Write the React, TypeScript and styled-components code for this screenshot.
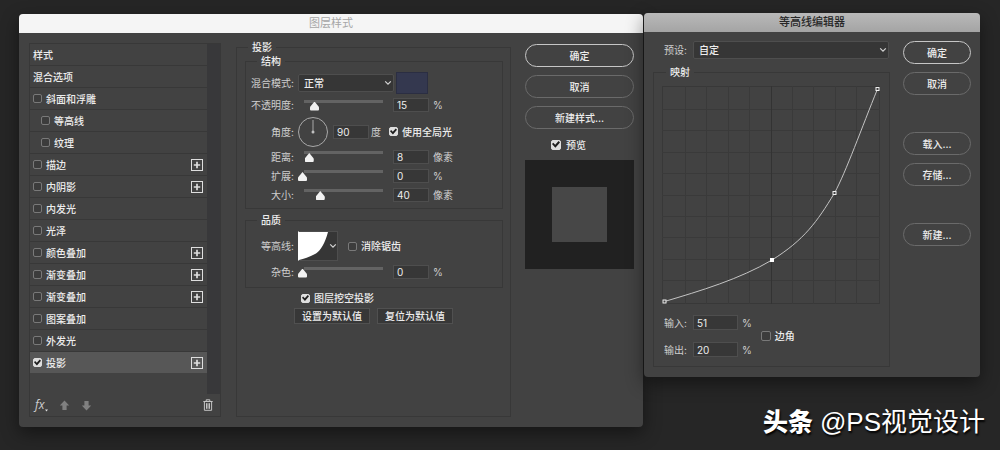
import React from "react";
import styled, { createGlobalStyle, css } from "styled-components";

const color = {
  desktop: "#262626",
  body: "#424242",
  line: "#383838",
  field: "#373737",
  fieldEdge: "#4e4e4e",
  text: "#ededed",
  label: "#cfcfcf",
  rail: "#38383a",
};

const GlobalStyle = createGlobalStyle`
  *, *::before, *::after { box-sizing: border-box; }
  body {
    margin: 0;
    background: ${color.desktop};
    color: ${color.text};
    font: 500 10px/12px Inter, "Noto Sans CJK SC", sans-serif;
  }
  button, input, select { font: inherit; color: inherit; margin: 0; }
  ul { list-style: none; margin: 0; padding: 0; }
  svg { display: block; }
`;

const Desktop = styled.main`
  position: relative;
  min-height: 100vh;
  padding: 13px 20px 22px 19px;
  display: grid;
  grid-template-columns: minmax(600px, 624fr) minmax(300px, 336fr);
  gap: 1px;
  align-items: start;
  overflow: hidden;
`;

const Dialog = styled.section<{ $front?: boolean }>`
  background: ${color.body};
  border-radius: 4px;
  box-shadow: 0 6px 18px rgba(0, 0, 0, 0.45);
  z-index: ${(p) => (p.$front ? 1 : 0)};
  margin-top: ${(p) => (p.$front ? 0 : 1)}px;
`;

const TitleBar = styled.h1<{ $front?: boolean }>`
  margin: 0;
  height: 19px;
  border-radius: 4px 4px 0 0;
  font-size: 11px;
  line-height: 19px;
  font-weight: ${(p) => (p.$front ? 500 : 400)};
  text-align: center;
  color: ${(p) => (p.$front ? "#262626" : "#a6a6a6")};
  background: ${(p) => (p.$front ? "linear-gradient(#b9b9b9, #a4a4a4)" : "#f5f5f5")};
`;

const StyleBody = styled.div`
  display: flex;
  padding: 8px 9px 10px 10px;
`;

const Sidebar = styled.aside`
  flex: none;
  width: 192px;
  margin: 2px 15px 0 0;
  border: 1px solid ${color.line};
  display: flex;
  flex-direction: column;
`;

const EffectArea = styled.div`
  flex: 1;
  display: flex;
  background: ${color.rail};
`;

const EffectList = styled.ul`
  flex: 1;
  margin-right: 13px;
  padding-bottom: 20px;
  background: ${color.body};
`;

const EffectRow = styled.li<{ $indent?: boolean; $active?: boolean }>`
  display: flex;
  align-items: center;
  justify-content: space-between;
  height: 22px;
  padding: 0 4px 0 ${(p) => (p.$indent ? 11 : 3)}px;
  border-bottom: 1px solid ${(p) => (p.$active ? color.body : color.line)};
  background: ${(p) => (p.$active ? "#575757" : "transparent")};
`;

const AddButton = styled.button`
  padding: 0;
  border: 0;
  background: none;
`;

const SidebarTools = styled.div`
  height: 22px;
  padding: 0 7px 0 5px;
  display: flex;
  align-items: center;
  gap: 11px;
`;

const ToolButton = styled.button<{ $last?: boolean }>`
  padding: 0;
  border: 0;
  background: none;
  color: #808080;
  display: flex;
  align-items: flex-end;
  ${(p) => p.$last && css`margin-left: auto; color: #c4c4c4;`}
`;

const FxMark = styled.span`
  font: italic 400 12px/14px "Open Sans", sans-serif;
  color: #d0d0d0;
`;

const CheckLabel = styled.label`
  display: flex;
  align-items: center;
  gap: 4px;
`;

const Checkbox = styled.input.attrs({ type: "checkbox" })`
  appearance: none;
  width: 9px;
  height: 9px;
  border: 1px solid #797979;
  border-radius: 2px;
  background: #3c3c3c;
  &:checked {
    border-color: #dedede;
    background: #dedede;
  }
  &:checked::before {
    content: "";
    display: block;
    width: 7px;
    height: 7px;
    background: #1e1e1e;
    clip-path: polygon(0 45%, 16% 28%, 40% 52%, 82% 6%, 100% 24%, 42% 92%);
  }
`;

const LargeCheckbox = styled(Checkbox)`
  width: 10px;
  height: 10px;
  &:checked::before {
    width: 8px;
    height: 8px;
  }
`;

const Group = styled.fieldset<{ $outer?: boolean }>`
  min-width: 0;
  margin: 0;
  border: 1px solid ${color.line};
  padding: ${(p) => (p.$outer ? "2px 7px 8px 8px" : "5px 0 4px")};
  & + & { margin-top: 5px; }
`;

const GroupTitle = styled.legend<{ $outer?: boolean }>`
  margin-left: ${(p) => (p.$outer ? 3 : 11)}px;
  padding: 0 4px;
  height: 12px;
`;

const Settings = styled(Group)`
  flex: 1;
`;

const Row = styled.div<{ $height: number }>`
  display: flex;
  align-items: center;
  height: ${(p) => p.$height}px;
`;

const RowLabel = styled.label`
  flex: none;
  width: 52px;
  padding-right: 4px;
  text-align: right;
  font-weight: 400;
  color: ${color.label};
`;

const Slider = styled.input.attrs({ type: "range" })`
  appearance: none;
  flex: none;
  width: 89px;
  height: 15px;
  margin-right: 6px;
  background: none;
  &::-webkit-slider-runnable-track {
    height: 13px;
    background: linear-gradient(#636363, #636363) 6px 1px / 79px 3px no-repeat;
  }
  &::-webkit-slider-thumb {
    appearance: none;
    width: 9px;
    height: 9px;
    margin-top: 3px;
    background: #f2f2f2;
    clip-path: path("M4.5 0 L8.6 5 Q9 5.6 9 6.2 V8 Q9 9 8 9 H1 Q0 9 0 8 V6.2 Q0 5.6 0.4 5 Z");
  }
`;

const NumberField = styled.input<{ $large?: boolean }>`
  flex: none;
  width: ${(p) => (p.$large ? 45 : 36)}px;
  height: ${(p) => (p.$large ? 15 : 14)}px;
  padding: 0 3px;
  border: 1px solid ${color.fieldEdge};
  background: ${color.field};
  font-weight: 400;
`;

const Unit = styled.span`
  margin-left: 4px;
  font-weight: 400;
  color: ${color.label};
`;

const SelectBox = styled.span`
  display: grid;
  align-items: center;
  flex: 1;
  & > * { grid-area: 1 / 1; }
  & > svg { justify-self: end; margin-right: 2px; pointer-events: none; }
`;

const ModeBox = styled(SelectBox)`
  flex: none;
  width: 96px;
`;

const Select = styled.select`
  appearance: none;
  width: 100%;
  height: 18px;
  padding: 0 5px;
  border: 1px solid ${color.fieldEdge};
  border-radius: 2px;
  background: #363636;
`;

const Swatch = styled.button`
  width: 32px;
  height: 22px;
  margin-left: 2px;
  border: 1px solid #2b2e42;
  background: #34384f;
`;

const Dial = styled.svg`
  flex: none;
  margin-right: 5px;
`;

const AngleUnit = styled(Unit)`
  margin-left: 2px;
`;

const SpacedCheck = styled(CheckLabel)`
  margin-left: 8px;
`;

const AntiAlias = styled(CheckLabel)`
  margin-left: 10px;
`;

const ContourButton = styled.button`
  width: 40px;
  height: 30px;
  padding: 0;
  border: 1px solid ${color.fieldEdge};
  border-left-color: #fff;
  background: #363636;
  display: flex;
  align-items: center;
  justify-content: space-between;
`;

const Defaults = styled.div`
  padding: 1px 0 0 49px;
`;

const Knockout = styled(CheckLabel)`
  height: 18px;
  margin: 0 0 1px 7px;
`;

const ButtonPair = styled.div`
  display: flex;
  gap: 7px;
`;

const SmallButton = styled.button`
  width: 76px;
  height: 16px;
  padding: 0;
  border: 1px solid #505050;
  background: #373737;
  line-height: 12px;
  white-space: nowrap;
`;

const Actions = styled.div<{ $width: number }>`
  flex: none;
  width: ${(p) => p.$width}px;
  display: flex;
  flex-direction: column;
  gap: 8px;
`;

const StyleActions = styled(Actions)`
  margin-left: 14px;
  padding-top: 3px;
`;

const EditorActions = styled(Actions)`
  margin-left: 13px;
`;

const PillButton = styled.button<{ $primary?: boolean; $newGroup?: boolean }>`
  height: 23px;
  margin-top: ${(p) => (p.$newGroup ? 29 : 0)}px;
  padding: 0;
  border: 1px solid ${(p) => (p.$primary ? "#c6c6c6" : "#6a6a6a")};
  border-radius: 12px;
  background: none;
`;

const PreviewCheck = styled(CheckLabel)`
  height: 15px;
  padding-left: 26px;
  gap: 5px;
`;

const Preview = styled.div`
  aspect-ratio: 1;
  display: grid;
  place-items: center;
  background: #212121;
  &::before {
    content: "";
    width: 50%;
    height: 50%;
    background: #474747;
  }
`;

const EditorBody = styled.div`
  display: flex;
  padding: 9px 9px 10px;
`;

const EditorMain = styled.div`
  flex: 1;
  min-width: 0;
`;

const PresetRow = styled.div`
  display: flex;
  align-items: center;
  padding: 0 1px 0 11px;
  margin-bottom: 7px;
`;

const EditorLabel = styled.label`
  width: 29px;
  font-weight: 400;
  color: ${color.label};
`;

const Mapping = styled(Group)`
  padding: 8px 9px 9px 8px;
`;

const MappingTitle = styled(GroupTitle)`
  margin-left: 4px;
`;

const CurveChart = styled.svg`
  width: 100%;
  height: auto;
`;

const MappingFields = styled.div`
  display: flex;
  align-items: center;
  gap: 9px;
  margin: 11px 0 0 2px;
`;

const FieldStack = styled.div`
  display: grid;
  gap: 12px;
`;

const FieldLine = styled.div`
  display: flex;
  align-items: center;
`;

const Watermark = styled.p`
  position: absolute;
  z-index: 2;
  right: 15px;
  bottom: 10px;
  margin: 0;
  display: flex;
  align-items: center;
  gap: 7px;
  font: 400 26px/36px "Liberation Sans", "Noto Sans CJK SC", sans-serif;
  color: #fff;
  text-shadow: 1px 2px 2px #000;
`;

const Brand = styled.strong`
  font-size: 25px;
  font-weight: 900;
`;

const Chevron = () => (
  <svg width="8" height="6" viewBox="0 0 8 6" fill="none" stroke="#d4d4d4" strokeWidth="1.2">
    <path d="M1.2 1.4 4 4.2 6.8 1.4" />
  </svg>
);

const PlusIcon = () => (
  <svg width="12" height="12" viewBox="0 0 12 12" fill="none" stroke="#dedede">
    <rect x="0.5" y="0.5" width="11" height="11" />
    <path d="M6 2.8V9.2M2.8 6H9.2" strokeWidth="1.7" />
  </svg>
);

const ArrowIcon = ({ down }: { down?: boolean }) => (
  <svg width="11" height="11" viewBox="0 0 11 11" fill="currentColor">
    <path d={down ? "M5.5 10.5 10.2 5.6H7.6V1H3.4V5.6H.8Z" : "M5.5 .5 10.2 5.4H7.6V10H3.4V5.4H.8Z"} />
  </svg>
);

const TrashIcon = () => (
  <svg width="10" height="12" viewBox="0 0 10 12" fill="none" stroke="currentColor">
    <path d="M.3 2.5H9.7M3.2 2.3V.8H6.8V2.3M1.4 2.8V11.3H8.6V2.8M3.5 4.2V9.8M5 4.2V9.8M6.5 4.2V9.8" />
  </svg>
);

type Effect = { name: string; heading?: boolean; indent?: boolean; add?: boolean; active?: boolean };

const effects: Effect[] = [
  { name: "样式", heading: true },
  { name: "混合选项", heading: true },
  { name: "斜面和浮雕" },
  { name: "等高线", indent: true },
  { name: "纹理", indent: true },
  { name: "描边", add: true },
  { name: "内阴影", add: true },
  { name: "内发光" },
  { name: "光泽" },
  { name: "颜色叠加", add: true },
  { name: "渐变叠加", add: true },
  { name: "渐变叠加", add: true },
  { name: "图案叠加" },
  { name: "外发光" },
  { name: "投影", add: true, active: true },
];

type SliderRowProps = { id: string; label: string; value: number; max: number; unit: string; height: number };

const SliderRow = ({ id, label, value, max, unit, height }: SliderRowProps) => (
  <Row $height={height}>
    <RowLabel htmlFor={id}>{label}:</RowLabel>
    <Slider aria-label={label} max={max} defaultValue={value} />
    <NumberField id={id} defaultValue={value} />
    <Unit>{unit}</Unit>
  </Row>
);

const gridSteps = [1, 2, 3, 4, 5, 6, 7, 8, 9];

const MappingCurve = () => (
  <CurveChart viewBox="0 0 218 218" role="img" aria-label="映射">
    <g fill="none" stroke="#383838">
      <rect x="0.5" y="0.5" width="217" height="217" />
      {gridSteps.map((i) => {
        const at = Math.round(1.5 + i * 21.4) + 0.5;
        return <path key={i} d={`M${at} 0V218M0 ${at}H218`} stroke="#3a3a3a" />;
      })}
      <path d="M109.500 0V218" stroke="#333" />
    </g>
    <path
      d="M2.5 215.5C38 205 78 193 110 174C142 154 155 136 172.5 107C184 86 200 41 215.5 3"
      fill="none"
      stroke="#c4c4c4"
    />
    <g fill="#424242" stroke="#f0f0f0">
      <rect x="1" y="214" width="3" height="3" />
      <rect x="171" y="105.500" width="3" height="3" />
      <rect x="214" y="1.500" width="3" height="3" />
      <rect x="108.500" y="172.500" width="3" height="3" fill="#fff" stroke="#fff" />
    </g>
  </CurveChart>
);

export default function App() {
  return (
    <Desktop lang="zh-CN">
      <GlobalStyle />

      <Dialog aria-label="图层样式">
        <TitleBar>图层样式</TitleBar>
        <StyleBody>
          <Sidebar>
            <EffectArea>
              <EffectList>
                {effects.map((e, i) => (
                  <EffectRow key={i} $indent={e.indent} $active={e.active}>
                    {e.heading ? (
                      <span>{e.name}</span>
                    ) : (
                      <CheckLabel>
                        <Checkbox defaultChecked={e.active} />
                        {e.name}
                      </CheckLabel>
                    )}
                    {e.add && (
                      <AddButton aria-label={`添加${e.name}`}>
                        <PlusIcon />
                      </AddButton>
                    )}
                  </EffectRow>
                ))}
              </EffectList>
            </EffectArea>
            <SidebarTools>
              <ToolButton aria-label="效果">
                <FxMark>fx</FxMark>
                <svg width="3" height="3" viewBox="0 0 3 3" fill="#e0e0e0">
                  <path d="M0 .5H3L1.500 2.500Z" />
                </svg>
              </ToolButton>
              <ToolButton aria-label="上移">
                <ArrowIcon />
              </ToolButton>
              <ToolButton aria-label="下移">
                <ArrowIcon down />
              </ToolButton>
              <ToolButton aria-label="删除" $last>
                <TrashIcon />
              </ToolButton>
            </SidebarTools>
          </Sidebar>

          <Settings $outer>
            <GroupTitle $outer>投影</GroupTitle>
            <Group>
              <GroupTitle>结构</GroupTitle>
              <Row $height={22}>
                <RowLabel htmlFor="mode">混合模式:</RowLabel>
                <ModeBox>
                  <Select id="mode">
                    <option>正常</option>
                  </Select>
                  <Chevron />
                </ModeBox>
                <Swatch aria-label="阴影颜色" />
              </Row>
              <SliderRow id="opacity" label="不透明度" value={15} max={100} unit="%" height={22} />
              <Row $height={31}>
                <RowLabel htmlFor="angle">角度:</RowLabel>
                <Dial width="30" height="30" viewBox="0 0 30 30" fill="none" stroke="#a8a8a8">
                  <circle cx="15" cy="15" r="14.500" />
                  <path d="M15 3V15" />
                  <circle cx="15" cy="15" r="1.500" fill="#c0c0c0" stroke="none" />
                </Dial>
                <NumberField id="angle" defaultValue={90} />
                <AngleUnit>度</AngleUnit>
                <SpacedCheck>
                  <Checkbox defaultChecked />
                  使用全局光
                </SpacedCheck>
              </Row>
              <SliderRow id="distance" label="距离" value={8} max={95} unit="像素" height={19} />
              <SliderRow id="spread" label="扩展" value={0} max={100} unit="%" height={19} />
              <SliderRow id="size" label="大小" value={40} max={180} unit="像素" height={19} />
            </Group>
            <Group>
              <GroupTitle>品质</GroupTitle>
              <Row $height={30}>
                <RowLabel as="span">等高线:</RowLabel>
                <ContourButton aria-label="等高线">
                  <svg width="29" height="28" viewBox="0 0 29 28">
                    <path d="M0 0H29C26 11 22 18 17 21.500C11 25 5 26.500 0 28Z" fill="#fff" />
                  </svg>
                  <Chevron />
                </ContourButton>
                <AntiAlias>
                  <Checkbox />
                  消除锯齿
                </AntiAlias>
              </Row>
              <SliderRow id="noise" label="杂色" value={0} max={100} unit="%" height={22} />
            </Group>
            <Defaults>
              <Knockout>
                <Checkbox defaultChecked />
                图层挖空投影
              </Knockout>
              <ButtonPair>
                <SmallButton>设置为默认值</SmallButton>
                <SmallButton>复位为默认值</SmallButton>
              </ButtonPair>
            </Defaults>
          </Settings>

          <StyleActions $width={109}>
            <PillButton $primary>确定</PillButton>
            <PillButton>取消</PillButton>
            <PillButton>新建样式...</PillButton>
            <PreviewCheck>
              <LargeCheckbox defaultChecked />
              预览
            </PreviewCheck>
            <Preview />
          </StyleActions>
        </StyleBody>
      </Dialog>

      <Dialog $front aria-label="等高线编辑器">
        <TitleBar $front>等高线编辑器</TitleBar>
        <EditorBody>
          <EditorMain>
            <PresetRow>
              <EditorLabel htmlFor="preset">预设:</EditorLabel>
              <SelectBox>
                <Select id="preset">
                  <option>自定</option>
                </Select>
                <Chevron />
              </SelectBox>
            </PresetRow>
            <Mapping>
              <MappingTitle>映射</MappingTitle>
              <MappingCurve />
              <MappingFields>
                <FieldStack>
                  <FieldLine>
                    <EditorLabel htmlFor="input">输入:</EditorLabel>
                    <NumberField id="input" $large defaultValue={51} />
                    <Unit>%</Unit>
                  </FieldLine>
                  <FieldLine>
                    <EditorLabel htmlFor="output">输出:</EditorLabel>
                    <NumberField id="output" $large defaultValue={20} />
                    <Unit>%</Unit>
                  </FieldLine>
                </FieldStack>
                <CheckLabel>
                  <LargeCheckbox />
                  边角
                </CheckLabel>
              </MappingFields>
            </Mapping>
          </EditorMain>
          <EditorActions $width={68}>
            <PillButton $primary>确定</PillButton>
            <PillButton>取消</PillButton>
            <PillButton $newGroup>载入...</PillButton>
            <PillButton>存储...</PillButton>
            <PillButton $newGroup>新建...</PillButton>
          </EditorActions>
        </EditorBody>
      </Dialog>

      <Watermark>
        <Brand>头条</Brand>
        <span>@PS视觉设计</span>
      </Watermark>
    </Desktop>
  );
}
